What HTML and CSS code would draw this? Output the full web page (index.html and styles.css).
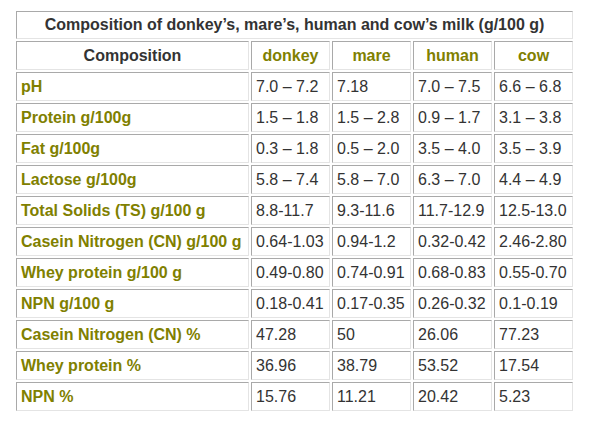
FILE: index.html
```html
<!DOCTYPE html>
<html>
<head>
<meta charset="utf-8">
<link rel="stylesheet" href="styles.css">
</head>
<body>
<table class="milk">
  <colgroup>
    <col class="c-label"><col class="c-val"><col class="c-val"><col class="c-val"><col class="c-val">
  </colgroup>
  <tr class="title-row"><th colspan="5" class="title">Composition of donkey’s, mare’s, human and cow’s milk (g/100 g)</th></tr>
  <tr><th class="head">Composition</th><th class="animal">donkey</th><th class="animal">mare</th><th class="animal">human</th><th class="animal">cow</th></tr>
  <tr><td class="label">pH</td><td>7.0 – 7.2</td><td>7.18</td><td>7.0 – 7.5</td><td>6.6 – 6.8</td></tr>
  <tr><td class="label">Protein g/100g</td><td>1.5 – 1.8</td><td>1.5 – 2.8</td><td>0.9 – 1.7</td><td>3.1 – 3.8</td></tr>
  <tr><td class="label">Fat g/100g</td><td>0.3 – 1.8</td><td>0.5 – 2.0</td><td>3.5 – 4.0</td><td>3.5 – 3.9</td></tr>
  <tr><td class="label">Lactose g/100g</td><td>5.8 – 7.4</td><td>5.8 – 7.0</td><td>6.3 – 7.0</td><td>4.4 – 4.9</td></tr>
  <tr><td class="label">Total Solids (TS) g/100 g</td><td>8.8-11.7</td><td>9.3-11.6</td><td>11.7-12.9</td><td>12.5-13.0</td></tr>
  <tr><td class="label">Casein Nitrogen (CN) g/100 g</td><td>0.64-1.03</td><td>0.94-1.2</td><td>0.32-0.42</td><td>2.46-2.80</td></tr>
  <tr><td class="label">Whey protein g/100 g</td><td>0.49-0.80</td><td>0.74-0.91</td><td>0.68-0.83</td><td>0.55-0.70</td></tr>
  <tr><td class="label">NPN g/100 g</td><td>0.18-0.41</td><td>0.17-0.35</td><td>0.26-0.32</td><td>0.1-0.19</td></tr>
  <tr><td class="label">Casein Nitrogen (CN) %</td><td>47.28</td><td>50</td><td>26.06</td><td>77.23</td></tr>
  <tr><td class="label">Whey protein %</td><td>36.96</td><td>38.79</td><td>53.52</td><td>17.54</td></tr>
  <tr><td class="label">NPN %</td><td>15.76</td><td>11.21</td><td>20.42</td><td>5.23</td></tr>
</table>
</body>
</html>
```
FILE: styles.css
```css
html, body {
  margin: 0;
  padding: 0;
  background: #ffffff;
}
body {
  font-family: "Liberation Sans", Arial, sans-serif;
  font-size: 16px;
  color: #333333;
}
.milk {
  margin: 9px 0 0 14px;
  border-collapse: separate;
  border-spacing: 2px;
  table-layout: fixed;
  width: 561px;
}
.c-label { width: 233px; }
.c-val { width: 79px; }
.milk th, .milk td {
  box-sizing: border-box;
  height: 29px;
  padding: 0 0 0 4px;
  border-style: solid;
  border-width: 1px;
  border-color: #a9a9a9 #e4e4e4 #e4e4e4 #a9a9a9;
  vertical-align: middle;
  white-space: nowrap;
  overflow: hidden;
  line-height: 18px;
}
.milk td {
  font-weight: normal;
  color: #333333;
  text-align: left;
}
.milk th {
  font-weight: bold;
  text-align: center;
  padding: 0;
}
.title-row .title {
  height: 28px;
  color: #333333;
}
.milk .head {
  color: #333333;
}
.milk .animal {
  color: #808000;
}
.milk td.label {
  color: #808000;
  font-weight: bold;
}
```
